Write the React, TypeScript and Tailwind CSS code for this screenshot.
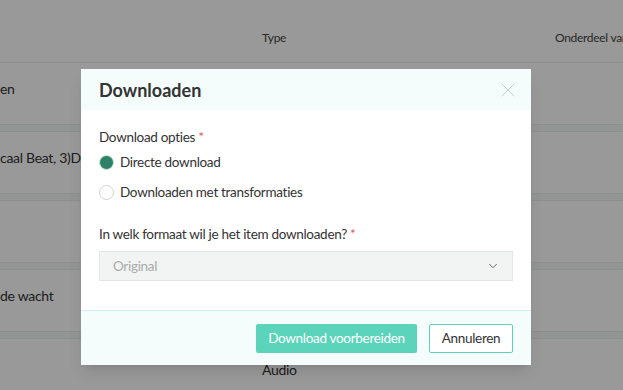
import { ChevronDown, X } from 'lucide-react'

const rows = [
  { name: 'en', type: '' },
  { name: 'caal Beat, 3)De', type: '' },
  { name: '', type: '' },
  { name: 'de wacht', type: '' },
  { name: '', type: 'Audio' },
]

function Radio({ checked, label }: { checked?: boolean; label: string }) {
  return (
    <label className="flex h-[18px] items-center gap-[6px]">
      {checked ? (
        <span className="h-[15px] w-[15px] rounded-full border border-[#d6e6e1] bg-[#2f8069]" />
      ) : (
        <span className="h-[15px] w-[15px] rounded-full border border-[#d4d4d4] bg-white" />
      )}
      <span>{label}</span>
    </label>
  )
}

export default function App() {
  return (
    <div
      className="relative h-[390px] w-[623px] overflow-hidden bg-white text-[13.5px] leading-[18px] tracking-[-0.3px] text-[#333]"
      style={{ fontFamily: 'Lato, "Noto Sans", sans-serif' }}
    >
      {/* table behind */}
      <div className="flex h-[63px] border-b border-[#ebeeed] pt-[29px] text-[12px] text-[#444]">
        <div className="w-[262px] shrink-0" />
        <div className="w-[293px] shrink-0">Type</div>
        <div className="whitespace-nowrap">Onderdeel van</div>
      </div>
      {rows.map((r, i) => (
        <div key={i}>
          <div className="flex h-[62px] border-b border-[#ebeeed] pt-[17px] text-[14px]">
            <div className="w-[262px] shrink-0 whitespace-nowrap">{r.name}</div>
            <div className="pt-[5px]">{r.type}</div>
          </div>
          <div className="h-[7px] border-b border-[#ebeeed] bg-[#f5f8f7]" />
        </div>
      ))}

      {/* overlay */}
      <div className="absolute inset-0 bg-black/40" />

      {/* modal */}
      <div className="absolute left-[81px] top-[69px] w-[450px] bg-white shadow-lg">
        <div className="flex h-[41px] items-center justify-between bg-[#f5fcfc] pl-[18px] pr-[11px]">
          <h2 className="text-[18px] font-bold tracking-normal text-[#333]">Downloaden</h2>
          <X size={24} strokeWidth={0.9} className="text-[#c4c8c7]" />
        </div>
        <div className="px-[18px] pb-[29px] pt-[18px]">
          <div>
            Download opties <span className="text-[#e25555]">*</span>
          </div>
          <div className="mt-[7px] flex flex-col gap-[12px]">
            <Radio checked label="Directe download" />
            <Radio label="Downloaden met transformaties" />
          </div>
          <div className="mt-[24px]">
            In welk formaat wil je het item downloaden? <span className="text-[#e25555]">*</span>
          </div>
          <div className="mt-[8px] flex h-[30px] items-center justify-between border border-[#e4e6e5] bg-[#f2f3f3] pl-[13px] pr-[12px] text-[#a9adab]">
            <span>Original</span>
            <ChevronDown size={14} strokeWidth={1.5} className="text-[#555]" />
          </div>
        </div>
        <div className="flex h-[55px] items-center justify-end gap-[12px] border-t border-[#d3f1ea] bg-[#f5fcfc] pr-[18px]">
          <button className="h-[29px] w-[161px] rounded-[2px] bg-[#5cd4bb] text-white">
            Download voorbereiden
          </button>
          <button className="h-[29px] w-[84px] rounded-[2px] border border-[#5cd4bb] bg-white text-[#333]">
            Annuleren
          </button>
        </div>
      </div>
    </div>
  )
}
